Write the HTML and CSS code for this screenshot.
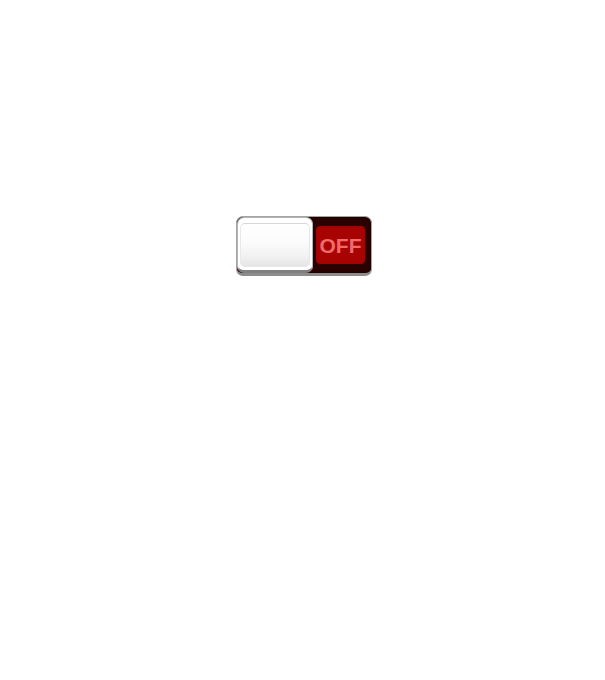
FILE: index.html
```html
<!DOCTYPE html>
<html lang="en">
<head>
<meta charset="utf-8">
<title>Switch</title>
<link rel="stylesheet" href="styles.css">
</head>
<body>
  <div class="stage">
    <div class="switch" role="switch" aria-checked="false">
      <div class="switch-knob"><span class="knob-face"></span></div>
      <div class="switch-label">OFF</div>
    </div>
  </div>
</body>
</html>
```
FILE: styles.css
```css
html, body {
  margin: 0;
  background: #ffffff;
}

.stage {
  padding: 216px 0 0 236px;
}

/* track */
.switch {
  box-sizing: border-box;
  width: 136px;
  height: 60px;
  display: flex;
  align-items: center;
  border: 1px solid #a4a4a4;
  border-bottom: 3px solid #8c8c8c;
  border-radius: 7px;
  background: #2a0202;
  box-shadow: inset 0 0 3px rgba(0, 0, 0, 0.6);
}

/* white thumb */
.switch-knob {
  box-sizing: border-box;
  align-self: stretch;
  width: 76px;
  flex: none;
  display: flex;
  padding: 5px 2px 3px;
  border: 1px solid #b4b4b4;
  border-bottom: 3px solid #808080;
  border-radius: 7px;
  background: #ffffff;
}

.knob-face {
  display: block;
  flex: 1;
  border: 1px solid #e8e8e8;
  border-top-color: #d8d8d8;
  border-radius: 5px;
  background: linear-gradient(#ffffff 0%, #fbfbfb 45%, #f0f0f0 80%, #e4e4e4 100%);
}

/* red state plate */
.switch-label {
  box-sizing: border-box;
  width: 49px;
  height: 38px;
  margin-left: 3px;
  display: flex;
  align-items: center;
  justify-content: center;
  border-radius: 4px;
  background: #a80303;
  box-shadow: inset 0 0 1px rgba(0, 0, 0, 0.4);
  color: #f06a6a;
  font-family: "Liberation Sans", Arial, sans-serif;
  font-weight: 700;
  font-size: 21px;
  padding-top: 2px;
}
```
